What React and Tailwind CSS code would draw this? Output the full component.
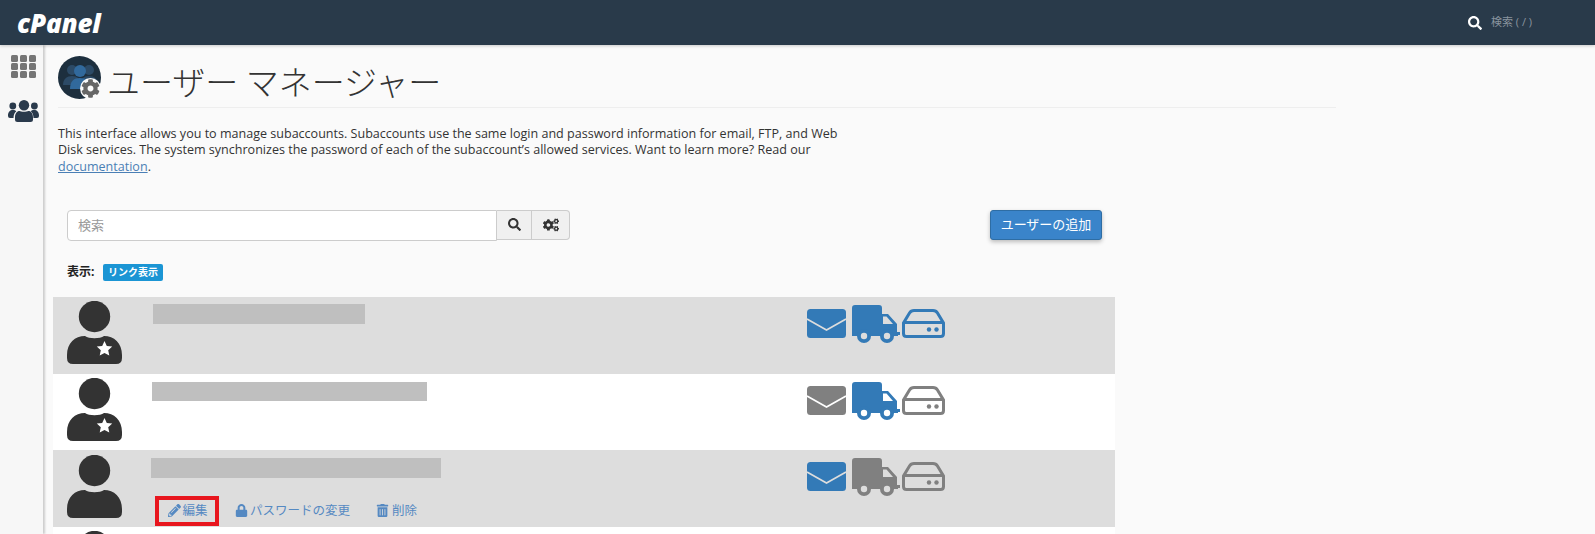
import { FaSearch, FaCogs, FaCog, FaPencilAlt, FaLock, FaTrashAlt } from 'react-icons/fa'

const BLUE = 'text-[#337ab7]'
const GRAY = 'text-[#808080]'

const Avatar = ({ star }) => (
  <svg width="55" height="63" viewBox="0 0 55 63" className="text-[#333333] shrink-0">
    <ellipse cx="27.5" cy="15.5" rx="15.7" ry="15.7" fill="currentColor" />
    <path d="M0 54C0 42 8 35 18 35C22 38 33 38 37 35C47 35 55 42 55 54V57Q55 63 49 63H6Q0 63 0 57Z" fill="currentColor" />
    {star && <polygon points="37.5,40 39.8,45 45.2,45.6 41.2,49.3 42.3,54.6 37.5,51.9 32.7,54.6 33.8,49.3 29.8,45.6 35.2,45" fill="#ffffff" />}
  </svg>
)

const Mail = ({ color, bg }) => (
  <svg width="39" height="29" viewBox="0 0 39 29" className={color}>
    <rect width="39" height="29" rx="3.5" fill="currentColor" />
    <path d="M0 10L19.5 21L39 10" fill="none" stroke={bg} strokeWidth="1.6" />
  </svg>
)

const Truck = ({ color, bg }) => (
  <svg width="48" height="38" viewBox="0 0 48 38" className={color}>
    <path d="M3 0H27a3 3 0 0 1 3 3V9H36L45 19V27H48V30H46V31H0V3a3 3 0 0 1 3-3z" fill="currentColor" />
    <path d="M31 11.5h3.5l6.5 7.5H31z" fill={bg} />
    <circle cx="12" cy="31" r="7" fill="currentColor" />
    <circle cx="12" cy="31" r="3.2" fill={bg} />
    <circle cx="35" cy="31" r="7" fill="currentColor" />
    <circle cx="35" cy="31" r="3.2" fill={bg} />
  </svg>
)

const Disk = ({ color }) => (
  <svg width="43" height="29" viewBox="0 0 43 29" className={color}>
    <path d="M12 1.5H31Q34 1.5 35.5 4L41.5 14V24.5Q41.5 27.5 38.5 27.5H4.5Q1.5 27.5 1.5 24.5V14L7.5 4Q9 1.5 12 1.5Z" fill="none" stroke="currentColor" strokeWidth="3" />
    <path d="M2 13.5H41" stroke="currentColor" strokeWidth="3" />
    <circle cx="27" cy="20.5" r="2.2" fill="currentColor" />
    <circle cx="34.5" cy="20.5" r="2.2" fill="currentColor" />
  </svg>
)

const GridIcon = () => (
  <div className="grid grid-cols-3 gap-x-[1.5px] gap-y-[1px] w-[25px]">
    {Array.from({ length: 9 }, (_, i) => (
      <div key={i} className="h-[7px] rounded-[1.5px] bg-[#757575]" />
    ))}
  </div>
)

const UsersIcon = () => (
  <svg width="31" height="22" viewBox="0 0 31 22" className="text-[#2a3a4c]">
    <circle cx="16" cy="5.2" r="5.2" fill="currentColor" />
    <circle cx="4.8" cy="6" r="3.4" fill="currentColor" />
    <circle cx="26.4" cy="6" r="3.4" fill="currentColor" />
    <path d="M0 15.5C0 12 2 10 5 10C6.5 10 7.5 10.5 8.3 11.2C6.5 12.6 5.5 15 5.5 18H2Q0 18 0 16Z" fill="currentColor" />
    <path d="M31 15.5C31 12 29 10 26 10C24.5 10 23.5 10.5 22.7 11.2C24.5 12.6 25.5 15 25.5 18H29Q31 18 31 16Z" fill="currentColor" />
    <path d="M7 17.5C7 13.5 9 11 11.5 11C13 12 18.5 12 20.5 11C23 11 25 13.5 25 17.5V19.5Q25 22 22.5 22H9.5Q7 22 7 19.5Z" fill="currentColor" />
  </svg>
)

const TitleIcon = () => (
  <div className="relative w-[43px] h-[43px] shrink-0">
    <svg width="43" height="43" viewBox="0 0 43 43">
      <circle cx="21.5" cy="21.5" r="21.5" fill="#1d2f3e" />
      <circle cx="14" cy="14" r="5" fill="#2c4a66" />
      <path d="M5 29c0-6 4-9 9-9s9 3 9 9z" fill="#2c4a66" />
      <circle cx="31" cy="14" r="5" fill="#2c4a66" />
      <path d="M22 29c0-6 4-9 9-9s9 3 9 9z" fill="#2c4a66" />
      <circle cx="22" cy="15" r="6" fill="#31699c" />
      <path d="M12 33c0-8 4-11 10-11s10 3 10 11z" fill="#31699c" />
    </svg>
    <div className="absolute right-0 bottom-0 w-[21px] h-[21px] rounded-full bg-[#fafafa] flex items-center justify-center">
      <FaCog className="text-[#666666] text-[19px]" />
    </div>
  </div>
)

const Row = ({ bg, star, barClass, mail, truck, disk, actions }) => (
  <div className={`flex h-[76.67px] shrink-0 ${bg === '#dddddd' ? 'bg-[#dddddd]' : 'bg-white'}`}>
    <div className="w-[98px] pl-[14px] pt-[4.5px] shrink-0">
      <Avatar star={star} />
    </div>
    <div className="w-[656px] shrink-0 relative">
      <div className={`bg-[#bfbfbf] ${barClass}`} />
      {actions}
    </div>
    <div className="flex items-start pt-[8px]">
      <div className="mt-[4px]"><Mail color={mail} bg={bg} /></div>
      <div className="ml-[6px]"><Truck color={truck} bg={bg} /></div>
      <div className="ml-[2px] mt-[4px]"><Disk color={disk} /></div>
    </div>
  </div>
)

const Actions = () => (
  <div className="absolute left-[4px] bottom-[1px] flex items-center text-[12.5px] text-[#5589c2] h-[30px]">
    <a className="flex items-center h-[30px] w-[64px] pl-[8.5px] border-4 border-[#e8161e]">
      <FaPencilAlt className="text-[13px] mr-[2px] shrink-0" />
      <span>編集</span>
    </a>
    <a className="flex items-center ml-[16px]">
      <FaLock className="text-[13px] mr-[2px]" />
      <span>パスワードの変更</span>
    </a>
    <a className="flex items-center ml-[26px]">
      <FaTrashAlt className="text-[13px] mr-[3px]" />
      <span>削除</span>
    </a>
  </div>
)

export default function App() {
  return (
    <div className="h-[534px] overflow-hidden bg-[#fafafa] text-[#333333] font-['Open_Sans','Noto_Sans_CJK_JP',sans-serif]">
      <header className="h-[45px] bg-[#293a4a] flex items-center justify-between relative z-10 shadow-[0_1px_3px_rgba(0,0,0,0.2)]">
        <span className="ml-[17px] text-white text-[26px] leading-none font-extrabold italic tracking-[-0.2px] font-['Open_Sans',sans-serif]">cPanel</span>
        <div className="flex items-center w-[127px]">
          <FaSearch className="text-white text-[14px]" />
          <span className="ml-[9px] text-[11px] text-[#8a949e]">検索 ( / )</span>
        </div>
      </header>

      <div className="flex">
        <aside className="w-[43px] h-[489px] shrink-0 bg-[#f7f7f7] shadow-[2px_0_2px_rgba(0,0,0,0.18)] flex flex-col items-start pt-[10px] pl-[8px]">
          <div className="ml-[3px]"><GridIcon /></div>
          <div className="mt-[22px]"><UsersIcon /></div>
        </aside>

        <main className="flex-1 pl-[15px]">
          <div className="w-[1278px] h-[63px] pt-[11px] flex items-start border-b border-[#eeeeee]">
            <TitleIcon />
            <h1 className="ml-[6px] text-[33px] leading-[44px] font-light text-[#333333] font-['Noto_Sans_CJK_JP',sans-serif] mt-[3px]">ユーザー マネージャー</h1>
          </div>

          <p className="w-[795px] mt-[18px] text-[12.55px] leading-[16.33px] text-[#333333]">
            This interface allows you to manage subaccounts. Subaccounts use the same login and password information for email, FTP, and Web Disk services. The system synchronizes the password of each of the subaccount’s allowed services. Want to learn more? Read our{' '}
            <a className="text-[#4a7fb5] underline">documentation</a>.
          </p>

          <div className="flex items-start mt-[35px] pl-[9px] w-[1044px] justify-between">
            <div className="flex items-start">
              <input
                placeholder="検索"
                className="w-[430px] h-[31px] px-[10px] bg-white border border-[#cccccc] rounded-l-[4px] text-[13px] placeholder:text-[#999999] outline-none"
              />
              <div className="flex h-[30px] bg-[#f0f0f0] border border-l-0 border-[#cccccc] rounded-r-[4px] text-[#333333]">
                <div className="w-[35px] flex items-center justify-center border-r border-[#cccccc]"><FaSearch className="text-[13px]" /></div>
                <div className="w-[37px] flex items-center justify-center"><FaCogs className="text-[16px]" /></div>
              </div>
            </div>
            <button className="w-[112px] h-[30px] bg-[#3a84ca] border border-[#2e6da4] rounded-[3px] text-white text-[13px] shadow-[0_2px_4px_rgba(0,0,0,0.25)]">ユーザーの追加</button>
          </div>

          <div className="flex items-center mt-[23px] pl-[9px] h-[17px]">
            <span className="text-[12px] font-bold text-[#222222] w-[36px]">表示:</span>
            <span className="w-[60px] h-[17px] bg-[#1b95d4] rounded-[2px] text-white text-[10px] font-bold leading-[17px] text-center">リンク表示</span>
          </div>

          <div className="mt-[16px] -ml-[5px] w-[1062px] flex flex-col">
            <Row bg="#dddddd" star barClass="ml-[2px] w-[212px] h-[20px] mt-[7px]" mail={BLUE} truck={BLUE} disk={BLUE} />
            <Row bg="#ffffff" star barClass="ml-[1px] w-[275px] h-[19px] mt-[8px]" mail={GRAY} truck={BLUE} disk={GRAY} />
            <Row bg="#dddddd" barClass="w-[290px] h-[20px] mt-[8px]" mail={BLUE} truck={GRAY} disk={GRAY} actions={<Actions />} />
            <Row bg="#ffffff" barClass="hidden" mail={GRAY} truck={GRAY} disk={GRAY} />
          </div>
        </main>
      </div>
    </div>
  )
}
